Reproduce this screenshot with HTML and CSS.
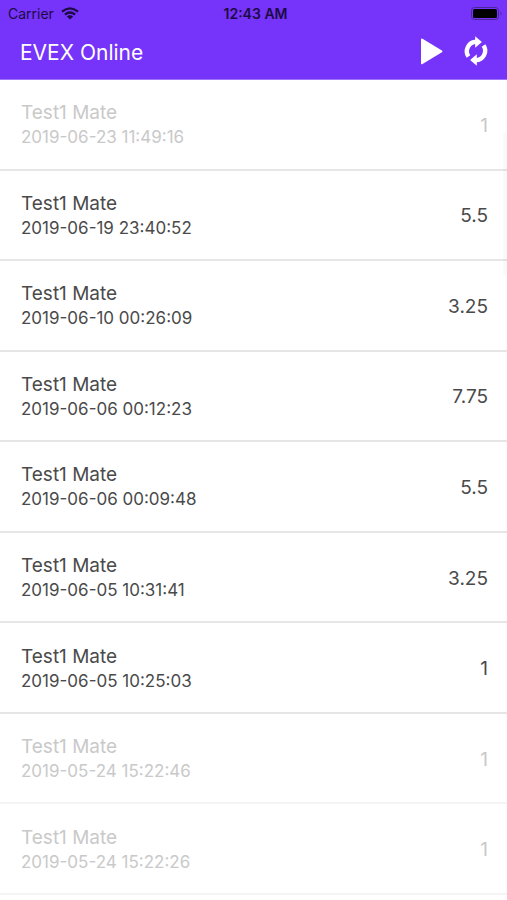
FILE: index.html
```html
<!DOCTYPE html>
<html lang="en">
<head>
  <meta charset="UTF-8">
  <meta name="viewport" content="width=device-width, initial-scale=1.0">
  <title>EVEX Online</title>
  <link rel="stylesheet" href="styles.css">
</head>
<body>
  <header class="header">
    <div class="status-bar">
      <div class="carrier">
        <span>Carrier</span>
        <svg class="wifi" viewBox="0 0 18 13" aria-hidden="true">
          <path d="M1 4.6 Q9 -2 17 4.6 M3.9 7.6 Q9 3.4 14.1 7.6" fill="none" stroke="currentColor" stroke-width="2.2"/>
          <path d="M9 12.6 L5.8 9.5 Q9 7.1 12.2 9.5 Z" fill="currentColor"/>
        </svg>
      </div>
      <div class="time">12:43 AM</div>
      <div class="battery">
        <svg viewBox="0 0 32 13" aria-hidden="true">
          <rect x="0.5" y="0.5" width="27" height="12" rx="3" fill="none" stroke="#4a2799"/>
          <rect x="2" y="2" width="24" height="9" rx="1.5" fill="#000"/>
          <path d="M29.5 4.5 Q31.5 6.5 29.5 8.5 Z" fill="#4a2799"/>
        </svg>
      </div>
    </div>
    <div class="toolbar">
      <h1>EVEX Online</h1>
      <button type="button" class="icon-btn" aria-label="Start">
        <svg viewBox="0 0 30 30" aria-hidden="true">
          <path d="M6 3.6 L25.4 15.4 L6 27.2 Z" fill="#fff" stroke="#fff" stroke-width="2" stroke-linejoin="round"/>
        </svg>
      </button>
      <button type="button" class="icon-btn" aria-label="Refresh">
        <svg viewBox="0 0 30 30" aria-hidden="true">
          <g id="half">
            <path d="M7.5 20.5 A9.4 9.4 0 0 1 15.5 5.8" fill="none" stroke="#fff" stroke-width="4.4"/>
            <path d="M14.2 0.2 L20.9 5.9 L14.2 11.8 Z" fill="#fff"/>
          </g>
          <use href="#half" transform="rotate(180 15 15)"/>
        </svg>
      </button>
    </div>
  </header>

  <ul class="list">
    <li class="row muted">
      <div>
        <div class="name">Test1 Mate</div>
        <div class="date">2019-06-23 11:49:16</div>
      </div>
      <div class="hours">1</div>
    </li>
    <li class="row">
      <div>
        <div class="name">Test1 Mate</div>
        <div class="date">2019-06-19 23:40:52</div>
      </div>
      <div class="hours">5.5</div>
    </li>
    <li class="row">
      <div>
        <div class="name">Test1 Mate</div>
        <div class="date">2019-06-10 00:26:09</div>
      </div>
      <div class="hours">3.25</div>
    </li>
    <li class="row">
      <div>
        <div class="name">Test1 Mate</div>
        <div class="date">2019-06-06 00:12:23</div>
      </div>
      <div class="hours">7.75</div>
    </li>
    <li class="row">
      <div>
        <div class="name">Test1 Mate</div>
        <div class="date">2019-06-06 00:09:48</div>
      </div>
      <div class="hours">5.5</div>
    </li>
    <li class="row">
      <div>
        <div class="name">Test1 Mate</div>
        <div class="date">2019-06-05 10:31:41</div>
      </div>
      <div class="hours">3.25</div>
    </li>
    <li class="row">
      <div>
        <div class="name">Test1 Mate</div>
        <div class="date">2019-06-05 10:25:03</div>
      </div>
      <div class="hours">1</div>
    </li>
    <li class="row muted light">
      <div>
        <div class="name">Test1 Mate</div>
        <div class="date">2019-05-24 15:22:46</div>
      </div>
      <div class="hours">1</div>
    </li>
    <li class="row muted light">
      <div>
        <div class="name">Test1 Mate</div>
        <div class="date">2019-05-24 15:22:26</div>
      </div>
      <div class="hours">1</div>
    </li>
  </ul>
  <div class="scroll-thumb"></div>
</body>
</html>
```
FILE: styles.css
```css
* {
  box-sizing: border-box;
}
body {
  margin: 0;
  min-height: 100vh;
  display: flex;
  flex-direction: column;
  background-color: #fff;
  color: #4a4a4a;
  font-family: Inter, "Liberation Sans", sans-serif;
}
.header {
  background-color: #7633f9;
  border-bottom: 1px solid #9f72fb;
}
.status-bar {
  display: grid;
  grid-template-columns: 1fr auto 1fr;
  align-items: center;
  height: 27px;
  padding: 0 4px 0 8px;
  color: #1c0b45;
  font-size: 14px;
}
.carrier {
  display: flex;
  align-items: center;
  gap: 7px;
}
.wifi {
  width: 18px;
  height: 13px;
}
.time {
  font-weight: 600;
}
.battery {
  display: flex;
  justify-content: flex-end;
}
.battery svg {
  width: 32px;
  height: 13px;
}
.toolbar {
  display: flex;
  align-items: center;
  gap: 15px;
  height: 52px;
  padding: 0 16px 2px 20px;
}
.toolbar h1 {
  flex: 1;
  margin: 0;
  color: #fff;
  font-size: 21px;
  font-weight: 400;
}
.icon-btn {
  width: 30px;
  height: 30px;
  margin-bottom: 2px;
  padding: 0;
  border: none;
  background: none;
  cursor: pointer;
}
.icon-btn svg {
  display: block;
  width: 30px;
  height: 30px;
}
.list {
  flex: 1;
  display: grid;
  grid-auto-rows: 1fr;
  margin: 0;
  padding: 0 0 5px;
  list-style: none;
}
.row {
  display: flex;
  align-items: center;
  justify-content: space-between;
  padding: 18px 19px 16px 21px;
  border-bottom: 2px solid #e6e6e6;
}
.name {
  font-size: 19px;
  line-height: 25px;
}
.date {
  font-size: 17px;
  line-height: 25px;
}
.hours {
  font-size: 19px;
}
.muted {
  color: #c9c9c9;
}
.light {
  border-bottom-color: #f4f4f4;
}
/* faint scroll indicator over the list */
.scroll-thumb {
  position: absolute;
  top: 132px;
  right: 0;
  width: 4px;
  height: 144px;
  border-radius: 2px;
  background-color: rgba(0, 0, 0, 0.02);
}
```
